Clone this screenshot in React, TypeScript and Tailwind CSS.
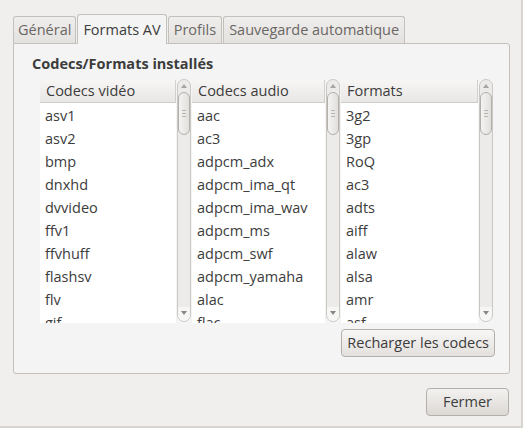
import React from "react";

const video = ["asv1", "asv2", "bmp", "dnxhd", "dvvideo", "ffv1", "ffvhuff", "flashsv", "flv", "gif"];
const audio = ["aac", "ac3", "adpcm_adx", "adpcm_ima_qt", "adpcm_ima_wav", "adpcm_ms", "adpcm_swf", "adpcm_yamaha", "alac", "flac"];
const formats = ["3g2", "3gp", "RoQ", "ac3", "adts", "aiff", "alaw", "alsa", "amr", "asf"];

function Scrollbar() {
  return (
    <div className="w-[16px] flex justify-center h-[243px] -mt-[1px]">
      <div className="relative w-[14px] h-full rounded-[7px] border border-[#cbc8c4] bg-[#ecebe9]">
        <svg className="absolute left-[3px] top-[4px]" width="6" height="4" viewBox="0 0 6 4">
          <path d="M0 4 L3 0 L6 4 Z" fill="#a8a5a1" />
        </svg>
        <div className="absolute left-[0px] top-[12px] w-[12px] h-[43px] rounded-[6px] border border-[#b3afaa] bg-gradient-to-r from-[#f4f3f2] to-[#e2e0dd] flex flex-col items-center justify-center gap-[2px]">
          <div className="w-[4px] h-px bg-[#b8b4af]" />
          <div className="w-[4px] h-px bg-[#b8b4af]" />
          <div className="w-[4px] h-px bg-[#b8b4af]" />
        </div>
        <div className="absolute left-[0px] bottom-0 w-[12px] h-[14px] rounded-b-[6px] bg-[#f6f6f5]" />
        <svg className="absolute left-[3px] bottom-[6px]" width="6" height="4" viewBox="0 0 6 4">
          <path d="M0 0 L6 0 L3 4 Z" fill="#8a8783" />
        </svg>
      </div>
    </div>
  );
}

function Column({ title, items, width }: { title: string; items: string[]; width: string }) {
  return (
    <div className="flex">
      <div className={`${width} h-[243px] bg-white flex flex-col overflow-hidden`}>
        <div className="h-[23px] shrink-0 bg-gradient-to-b from-[#f7f6f5] to-[#e9e7e5] border-b border-[#cfccc8] border-r border-r-[#d4d1cd] pl-[6px] flex items-center text-[14.5px] text-[#3c3c3c]">
          {title}
        </div>
        <div className="flex flex-col pt-[2px]">
          {items.map((it) => (
            <div key={it} className="h-[23px] shrink-0 pl-[5px] flex items-center text-[14.5px] text-[#3c3c3c] leading-none">
              {it}
            </div>
          ))}
        </div>
      </div>
      <Scrollbar />
    </div>
  );
}

export default function App() {
  return (
    <div
      className="w-[523px] h-[428px] bg-[#f0efee] flex flex-col border-r-2 border-b-2 border-[#d8d5d1]"
      style={{ fontFamily: '"Open Sans", "Noto Sans", sans-serif' }}
    >
      <div className="pl-[13px] pt-[14px] flex items-end gap-[1px] text-[14.5px] relative z-10">
        <div className="h-[27px] px-[4px] flex items-center border border-b-0 border-[#c4c0bb] rounded-t-[3px] bg-gradient-to-b from-[#efeeed] to-[#e4e2df] text-[#6a6663]">
          Général
        </div>
        <div className="h-[30px] -mb-px px-[5px] flex items-center border border-b-0 border-[#c4c0bb] rounded-t-[3px] bg-[#f4f4f4] text-[#3c3c3c]">
          Formats AV
        </div>
        <div className="h-[27px] px-[5px] flex items-center border border-b-0 border-[#c4c0bb] rounded-t-[3px] bg-gradient-to-b from-[#efeeed] to-[#e4e2df] text-[#6a6663]">
          Profils
        </div>
        <div className="h-[27px] px-[5px] flex items-center border border-b-0 border-[#c4c0bb] rounded-t-[3px] bg-gradient-to-b from-[#efeeed] to-[#e4e2df] text-[#6a6663]">
          Sauvegarde automatique
        </div>
      </div>
      <div className="ml-[13px] w-[497px] h-[331px] border border-[#c4c0bb] rounded-b-[3px] rounded-tr-[3px] bg-[#f4f4f4] flex flex-col">
        <div className="pl-[18px] pt-[9px] h-[36px] text-[14.5px] font-bold text-[#3c3c3c]">
          Codecs/Formats installés
        </div>
        <div className="pl-[26px] flex">
          <Column title="Codecs vidéo" items={video} width="w-[136px]" />
          <Column title="Codecs audio" items={audio} width="w-[133px]" />
          <Column title="Formats" items={formats} width="w-[137px]" />
        </div>
        <div className="flex justify-end pr-[14px] pt-[6px]">
          <button className="h-[28px] px-[5px] rounded-[4px] border border-[#b3afaa] bg-gradient-to-b from-[#f8f7f6] to-[#e3e0dd] text-[14.5px] text-[#3c3c3c]">
            Recharger les codecs
          </button>
        </div>
      </div>
      <div className="flex justify-end pr-[12px] pt-[14px]">
        <button className="w-[83px] h-[28px] rounded-[4px] border border-[#b3afaa] bg-gradient-to-b from-[#f3f2f0] to-[#dcd8d4] text-[14.5px] text-[#3c3c3c]">
          Fermer
        </button>
      </div>
    </div>
  );
}
